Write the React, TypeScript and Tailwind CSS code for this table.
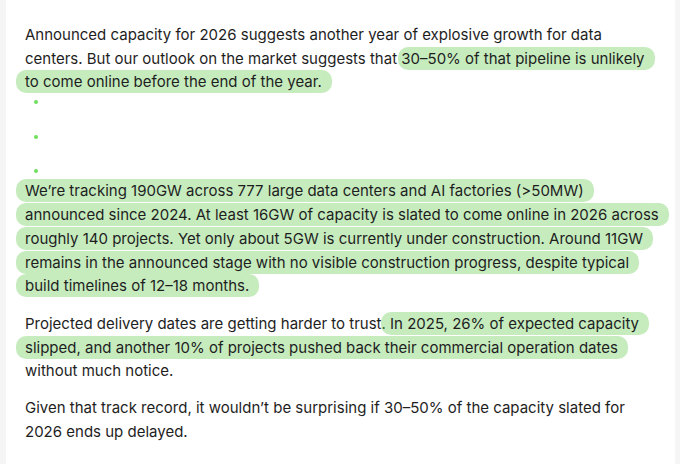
import React from "react";

const hl =
  "bg-[rgba(105,205,85,0.38)] box-decoration-clone rounded-[10px] py-[2px] pl-[9px] ml-[-9px] shadow-[10px_0_0_rgba(105,205,85,0.38)]";
const hlFirst =
  "bg-[rgba(105,205,85,0.38)] box-decoration-clone rounded-[10px] py-[2px] pl-[3px] ml-[-3px] shadow-[-14px_0_0_rgba(105,205,85,0.0),10px_0_0_rgba(105,205,85,0.38)]";

export default function App() {
  return (
    <div
      className="w-[680px] h-[464px] flex bg-white overflow-hidden"
      style={{ fontFamily: "Inter, 'Noto Sans', sans-serif" }}
    >
      <div className="w-[6px] bg-[#f5f5f5]" />
      <div className="flex-1 pl-[19px] pr-[16px] pt-[23px] text-[15px] leading-[23.7px] text-[#1e1e1e]">
        <p>
          Announced capacity for 2026 suggests another year of explosive growth for data
          centers. But our outlook on the market suggests that{" "}
          <span className={hlFirst}>30–50% of that pipeline is unlikely</span>{" "}
          <span className={hl}>to come online before the end of the year.</span>
        </p>
        <ul className="flex flex-col gap-[30.7px] py-[6px] pl-[9px]">
          <li className="w-[4px] h-[4px] rounded-full bg-[#6fe05b]" />
          <li className="w-[4px] h-[4px] rounded-full bg-[#6fe05b]" />
          <li className="w-[4px] h-[4px] rounded-full bg-[#6fe05b]" />
        </ul>
        <p>
          <span className={hl}>
            We’re tracking 190GW across 777 large data centers and AI factories (&gt;50MW)
            announced since 2024. At least 16GW of capacity is slated to come online in 2026
            across roughly 140 projects. Yet only about 5GW is currently under construction.
            Around 11GW remains in the announced stage with no visible construction progress,
            despite typical build timelines of 12–18 months.
          </span>
        </p>
        <p className="mt-[14px]">
          Projected delivery dates are getting harder to trust.{" "}
          <span className={hl}>
            In 2025, 26% of expected capacity slipped, and another 10% of projects pushed back
            their commercial operation dates
          </span>{" "}
          without much notice.
        </p>
        <p className="mt-[13px]">
          Given that track record, it wouldn’t be surprising if 30–50% of the capacity slated
          for 2026 ends up delayed.
        </p>
      </div>
      <div className="w-[5px] bg-[#f5f5f5]" />
    </div>
  );
}
